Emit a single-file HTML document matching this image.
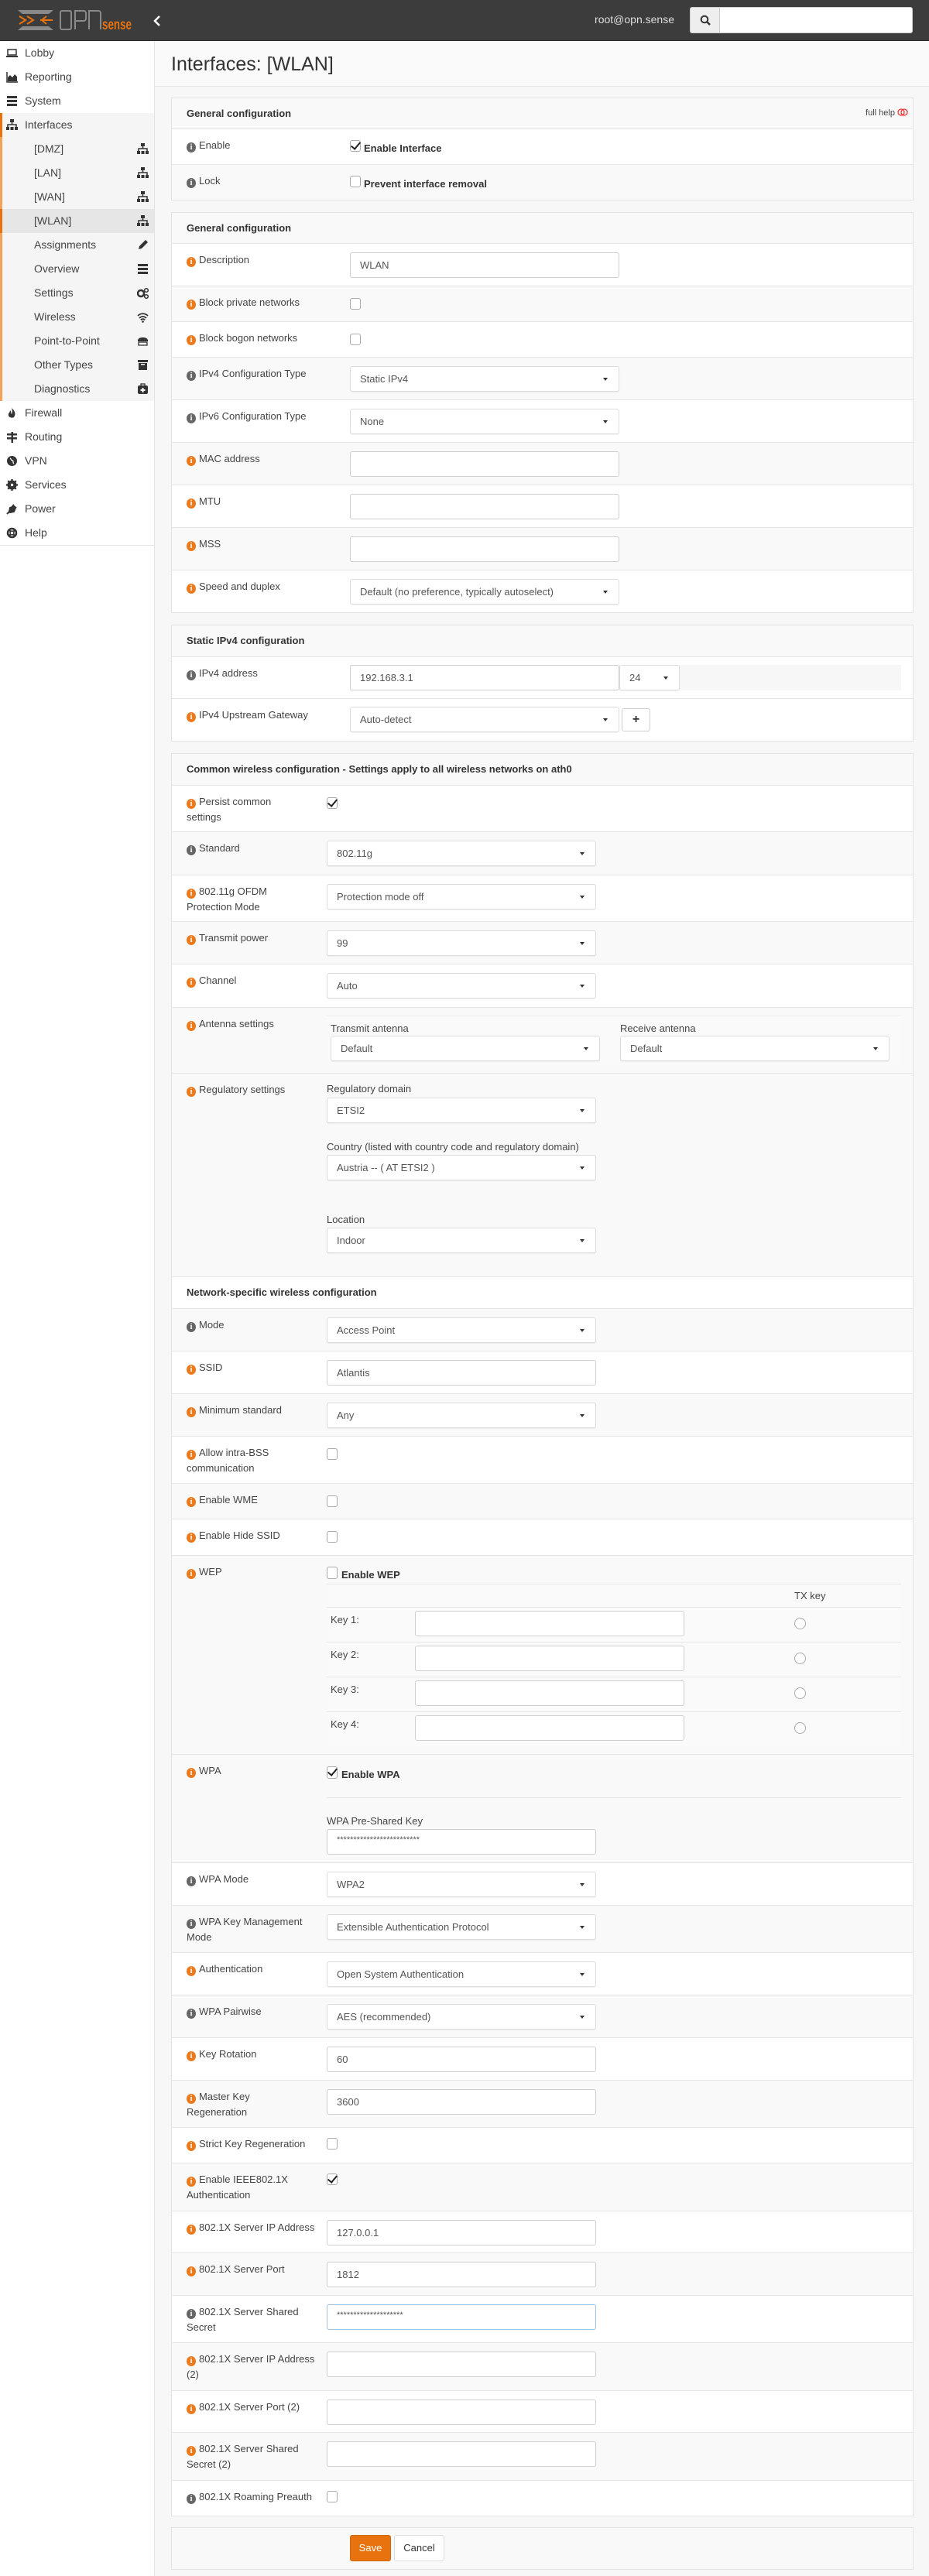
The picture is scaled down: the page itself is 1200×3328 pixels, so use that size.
<!DOCTYPE html>
<html><head><meta charset="utf-8"><style>
*{margin:0;padding:0}
body{width:1200px;height:3328px;position:relative;background:#f7f7f7;font-family:"Liberation Sans",sans-serif;color:#444;overflow:hidden}
.top{position:absolute;left:0;top:0;width:1200px;height:52px;background:#3c3c3c;border-bottom:1px solid #2a2a2a}
.side{position:absolute;left:0;top:53px;width:199px;height:3275px;background:#fff;border-right:1px solid #e3e3e3}
.it{position:absolute;left:0;width:199px;height:31px;font-size:14px;line-height:31px;color:#444}
.it .t{position:absolute;left:32px}
.it .ic{position:absolute;left:8px;top:8px;width:15px;height:15px}
.sub{background:#f5f5f5;border-left:3px solid #f4a25a;width:196px}
.sub .t{left:41px}
.sub .ic{left:174px}
.ttl{position:absolute;left:200px;top:53px;width:1000px;height:58px;background:#fafafa;border-bottom:1px solid #e5e5e5}
.ttl h1{position:absolute;left:21px;top:16px;font-size:25px;font-weight:normal;color:#333}
.box{position:absolute;left:221px;width:959px;border:1px solid #e3e3e3;box-sizing:border-box;background:#fff}
.r{position:absolute;left:222px;width:957px;box-sizing:border-box;border-top:1px solid #e6e6e6;background:#fff}
.g{background:#f9f9f9}
.lb{position:absolute;left:19px;top:11px;font-size:13px;line-height:20px;color:#444;white-space:nowrap}
.h{position:absolute;left:19px;top:12px;font-size:13px;font-weight:bold;color:#333;white-space:nowrap}
.i{display:inline-block;width:12px;height:13px;border-radius:50%;background:#666;color:#fff;font:bold 10px/13px "Liberation Serif",serif;text-align:center;margin-right:4px;vertical-align:-1px}
.o{background:#ec7a1c}
.in{position:absolute;top:11px;left:200px;width:348px;height:33px;border:1px solid #cfcfcf;border-radius:3px;background:#fff;box-sizing:border-box;font-size:13px;padding:0 12px;line-height:31px;color:#555;white-space:nowrap}
.s2 .in{left:230px}
.sel{box-shadow:0 1px 1px rgba(0,0,0,.06);border-color:#ddd}
.sel:after{content:"";position:absolute;right:14px;top:14px;border-left:3px solid transparent;border-right:3px solid transparent;border-top:4px solid #333}
.cb{position:absolute;left:200px;top:15px;width:14px;height:15px;border:1px solid #aaa;border-radius:3px;background:#fff;box-sizing:border-box}
.s2 .cb{left:230px}
.ck:after{content:"";position:absolute;left:3px;top:-1px;width:5px;height:10px;border-right:2.5px solid #222;border-bottom:2.5px solid #222;transform:rotate(40deg)}
.bl{position:absolute;font-size:13px;font-weight:bold;color:#333;white-space:nowrap}
.sm{position:absolute;font-size:13px;color:#444;white-space:nowrap}
.rad{position:absolute;width:15px;height:15px;border:1px solid #aaa;border-radius:50%;box-sizing:border-box;background:#fff}
</style></head><body>

<div class="top">
 <svg style="position:absolute;left:22px;top:11px" width="150" height="30" viewBox="0 0 150 30">
  <path d="M1 2h46l-6 5H7zM1 28h46l-6-5H7z" fill="#8a8a8a"/>
  <path d="M3 10l8 5-8 5M13 10l8 5-8 5" stroke="#e8730e" stroke-width="2" fill="none"/>
  <path d="M30 15h16M38 10l-6 5 6 5" stroke="#e8730e" stroke-width="2" fill="none"/>
  <rect x="56" y="3" width="14" height="24" rx="2" fill="none" stroke="#8a8a8a" stroke-width="2"/>
  <path d="M75 27V3h11a3 3 0 0 1 3 3v7a3 3 0 0 1-3 3H75" fill="none" stroke="#8a8a8a" stroke-width="2"/>
  <path d="M93 27V3h12a3 3 0 0 1 3 3v21" fill="none" stroke="#8a8a8a" stroke-width="2"/>
  <text x="110" y="27" font-family="Liberation Sans Narrow,Liberation Sans,sans-serif" font-weight="bold" font-size="19" fill="#e8730e" textLength="38" lengthAdjust="spacingAndGlyphs">sense</text>
 </svg>
 <svg style="position:absolute;left:198px;top:20px" width="10" height="14"><path d="M8 1L2 7l6 6" stroke="#fff" stroke-width="2.5" fill="none"/></svg>
 <div style="position:absolute;right:329px;top:17px;font-size:14px;color:#ddd">root@opn.sense</div>
 <div style="position:absolute;left:891px;top:9px;width:288px;height:34px;background:#fff;border-radius:3px;border:1px solid #ccc;box-sizing:border-box"></div>
 <div style="position:absolute;left:892px;top:10px;width:37px;height:32px;background:#eee;border-right:1px solid #ccc"><svg style="position:absolute;left:12px;top:9px" width="14" height="14"><circle cx="6" cy="6" r="4.3" stroke="#333" stroke-width="2" fill="none"/><path d="M9 9l4 4" stroke="#333" stroke-width="2.5"/></svg></div>
</div>

<div class="side">
 <div class="it" style="top:0"><svg class="ic" viewBox="0 0 15 15"><rect x="2" y="3" width="11" height="7" fill="none" stroke="#333" stroke-width="1.5"/><rect x="0" y="11" width="15" height="2" fill="#333"/></svg><span class="t">Lobby</span></div>
 <div class="it" style="top:31px"><svg class="ic" viewBox="0 0 15 15"><path d="M1 1v13h14" stroke="#333" stroke-width="1.5" fill="none"/><path d="M2 13V8l3-3 3 3 3-4 3 3v6z" fill="#333"/></svg><span class="t">Reporting</span></div>
 <div class="it" style="top:62px"><svg class="ic" viewBox="0 0 15 15"><rect x="1" y="1" width="13" height="3" fill="#333"/><rect x="1" y="6" width="13" height="3" fill="#333"/><rect x="1" y="11" width="13" height="3" fill="#333"/></svg><span class="t">System</span></div>
 <div class="it" style="top:93px;background:#f5f5f5;border-left:3px solid #e8730e;width:196px"><svg class="ic" style="left:5px" viewBox="0 0 15 15"><rect x="5" y="0" width="5" height="4" fill="#333"/><path d="M7.5 4v3M2 10V7h11v3" stroke="#333" stroke-width="1.5" fill="none"/><rect x="0" y="10" width="4" height="4" fill="#333"/><rect x="5.5" y="10" width="4" height="4" fill="#333"/><rect x="11" y="10" width="4" height="4" fill="#333"/></svg><span class="t" style="left:29px">Interfaces</span></div>
 <div class="it sub" style="top:124px"><span class="t">[DMZ]</span><svg class="ic" viewBox="0 0 15 15"><rect x="5" y="0" width="5" height="4" fill="#333"/><path d="M7.5 4v3M2 10V7h11v3" stroke="#333" stroke-width="1.5" fill="none"/><rect x="0" y="10" width="4" height="4" fill="#333"/><rect x="5.5" y="10" width="4" height="4" fill="#333"/><rect x="11" y="10" width="4" height="4" fill="#333"/></svg></div>
 <div class="it sub" style="top:155px"><span class="t">[LAN]</span><svg class="ic" viewBox="0 0 15 15"><rect x="5" y="0" width="5" height="4" fill="#333"/><path d="M7.5 4v3M2 10V7h11v3" stroke="#333" stroke-width="1.5" fill="none"/><rect x="0" y="10" width="4" height="4" fill="#333"/><rect x="5.5" y="10" width="4" height="4" fill="#333"/><rect x="11" y="10" width="4" height="4" fill="#333"/></svg></div>
 <div class="it sub" style="top:186px"><span class="t">[WAN]</span><svg class="ic" viewBox="0 0 15 15"><rect x="5" y="0" width="5" height="4" fill="#333"/><path d="M7.5 4v3M2 10V7h11v3" stroke="#333" stroke-width="1.5" fill="none"/><rect x="0" y="10" width="4" height="4" fill="#333"/><rect x="5.5" y="10" width="4" height="4" fill="#333"/><rect x="11" y="10" width="4" height="4" fill="#333"/></svg></div>
 <div class="it sub" style="top:217px;background:#e6e6e6;border-left-color:#e8730e"><span class="t">[WLAN]</span><svg class="ic" viewBox="0 0 15 15"><rect x="5" y="0" width="5" height="4" fill="#333"/><path d="M7.5 4v3M2 10V7h11v3" stroke="#333" stroke-width="1.5" fill="none"/><rect x="0" y="10" width="4" height="4" fill="#333"/><rect x="5.5" y="10" width="4" height="4" fill="#333"/><rect x="11" y="10" width="4" height="4" fill="#333"/></svg></div>
 <div class="it sub" style="top:248px"><span class="t">Assignments</span><svg class="ic" viewBox="0 0 15 15"><path d="M2 13l1-4 8-8 3 3-8 8z" fill="#333"/></svg></div>
 <div class="it sub" style="top:279px"><span class="t">Overview</span><svg class="ic" viewBox="0 0 15 15"><rect x="1" y="1" width="13" height="3" fill="#333"/><rect x="1" y="6" width="13" height="3" fill="#333"/><rect x="1" y="11" width="13" height="3" fill="#333"/></svg></div>
 <div class="it sub" style="top:310px"><span class="t">Settings</span><svg class="ic" viewBox="0 0 15 15"><circle cx="5" cy="8" r="4" fill="none" stroke="#333" stroke-width="2.5"/><circle cx="12" cy="4" r="2.3" fill="none" stroke="#333" stroke-width="1.5"/><circle cx="12" cy="12" r="2.3" fill="none" stroke="#333" stroke-width="1.5"/></svg></div>
 <div class="it sub" style="top:341px"><span class="t">Wireless</span><svg class="ic" viewBox="0 0 15 15"><path d="M1 6a9 9 0 0 1 13 0M3 9a6 6 0 0 1 9 0M5 11.5a3 3 0 0 1 5 0" stroke="#333" stroke-width="1.8" fill="none"/><circle cx="7.5" cy="13.5" r="1.3" fill="#333"/></svg></div>
 <div class="it sub" style="top:372px"><span class="t">Point-to-Point</span><svg class="ic" viewBox="0 0 15 15"><path d="M1 6a7 5 0 0 1 13 0v2H1z" fill="#333"/><rect x="2" y="9" width="11" height="4" fill="none" stroke="#333" stroke-width="1.3"/></svg></div>
 <div class="it sub" style="top:403px"><span class="t">Other Types</span><svg class="ic" viewBox="0 0 15 15"><rect x="1" y="1" width="13" height="3" fill="#333"/><rect x="2" y="5" width="11" height="9" fill="#333"/><rect x="5" y="6" width="5" height="1.5" fill="#f5f5f5"/></svg></div>
 <div class="it sub" style="top:434px"><span class="t">Diagnostics</span><svg class="ic" viewBox="0 0 15 15"><rect x="1" y="3" width="13" height="11" rx="2" fill="#333"/><rect x="5" y="1" width="5" height="3" fill="none" stroke="#333" stroke-width="1.3"/><path d="M7.5 6v6M4.5 9h6" stroke="#fff" stroke-width="2"/></svg></div>
 <div class="it" style="top:465px"><svg class="ic" viewBox="0 0 15 15"><path d="M7 1c4 4 6 7 3 12-1 1-6 1-7-2-1-3 2-4 2-7 2 2 1 4 2 5 1-2 1-5 0-8z" fill="#333"/></svg><span class="t">Firewall</span></div>
 <div class="it" style="top:496px"><svg class="ic" viewBox="0 0 15 15"><rect x="1" y="3" width="13" height="2.5" fill="#333"/><rect x="1" y="8" width="13" height="2.5" fill="#333"/><rect x="6.5" y="1" width="2.5" height="14" fill="#333"/></svg><span class="t">Routing</span></div>
 <div class="it" style="top:527px"><svg class="ic" viewBox="0 0 15 15"><circle cx="7.5" cy="7.5" r="6.5" fill="#333"/><path d="M5 4c2 1 1 3 3 3s0 3 2 4" stroke="#fff" stroke-width="1.3" fill="none"/></svg><span class="t">VPN</span></div>
 <div class="it" style="top:558px"><svg class="ic" viewBox="0 0 15 15"><circle cx="7.5" cy="7.5" r="4.5" fill="none" stroke="#333" stroke-width="3"/><path d="M7.5 0v15M0 7.5h15M2.2 2.2l10.6 10.6M12.8 2.2L2.2 12.8" stroke="#333" stroke-width="2.2"/><circle cx="7.5" cy="7.5" r="1.7" fill="#fff"/></svg><span class="t">Services</span></div>
 <div class="it" style="top:589px"><svg class="ic" viewBox="0 0 15 15"><path d="M1 14l4-4M4 11l1-5 5-2 2 2-2 5-5 1zM10 2l-2 2M13 5l-2 2" stroke="#333" stroke-width="2" fill="#333"/></svg><span class="t">Power</span></div>
 <div class="it" style="top:620px;border-bottom:1px solid #e5e5e5"><svg class="ic" viewBox="0 0 15 15"><circle cx="7.5" cy="7.5" r="5.5" fill="none" stroke="#333" stroke-width="2.5"/><circle cx="7.5" cy="7.5" r="2.5" fill="none" stroke="#333" stroke-width="1.5"/><path d="M3 3l3 3M12 3l-3 3M3 12l3-3M12 12l-3-3" stroke="#333" stroke-width="2"/></svg><span class="t">Help</span></div>
</div>

<div class="ttl"><h1>Interfaces: [WLAN]</h1></div>

<!-- Section 1 -->
<div class="box" style="top:126px;height:133px"></div>
<div class="s2">
<div class="r g" style="top:127px;height:39px;border-top:0"><div class="h">General configuration</div><div style="position:absolute;right:6px;top:13px;font-size:11px;color:#444">full help <svg width="14" height="10" style="vertical-align:-1px"><circle cx="5" cy="5" r="4" stroke="#e33" fill="none" stroke-width="1.3"/><circle cx="9" cy="5" r="4" stroke="#e33" fill="none" stroke-width="1.3"/></svg></div></div>
<div class="r" style="top:166px;height:46px"><div class="lb"><span class="i">i</span>Enable</div><div class="cb ck" style="top:14px"></div><div class="bl" style="left:248px;top:17px">Enable Interface</div></div>
<div class="r g" style="top:212px;height:46px"><div class="lb"><span class="i">i</span>Lock</div><div class="cb" style="top:14px"></div><div class="bl" style="left:248px;top:17px">Prevent interface removal</div></div>

<!-- Section 2 -->
<div class="box" style="top:274px;height:518px"></div>
<div class="r g" style="top:275px;height:39px;border-top:0"><div class="h">General configuration</div></div>
<div class="r" style="top:314px;height:55px"><div class="lb"><span class="i o">i</span>Description</div><div class="in">WLAN</div></div>
<div class="r g" style="top:369px;height:46px"><div class="lb"><span class="i o">i</span>Block private networks</div><div class="cb"></div></div>
<div class="r" style="top:415px;height:46px"><div class="lb"><span class="i o">i</span>Block bogon networks</div><div class="cb"></div></div>
<div class="r g" style="top:461px;height:55px"><div class="lb"><span class="i">i</span>IPv4 Configuration Type</div><div class="in sel">Static IPv4</div></div>
<div class="r" style="top:516px;height:55px"><div class="lb"><span class="i">i</span>IPv6 Configuration Type</div><div class="in sel">None</div></div>
<div class="r g" style="top:571px;height:55px"><div class="lb"><span class="i o">i</span>MAC address</div><div class="in"></div></div>
<div class="r" style="top:626px;height:55px"><div class="lb"><span class="i o">i</span>MTU</div><div class="in"></div></div>
<div class="r g" style="top:681px;height:55px"><div class="lb"><span class="i o">i</span>MSS</div><div class="in"></div></div>
<div class="r" style="top:736px;height:55px"><div class="lb"><span class="i o">i</span>Speed and duplex</div><div class="in sel">Default (no preference, typically autoselect)</div></div>

<!-- Section 3 -->
<div class="box" style="top:807px;height:151px"></div>
<div class="r g" style="top:808px;height:40px;border-top:0"><div class="h">Static IPv4 configuration</div></div>
<div class="r" style="top:848px;height:54px"><div class="lb"><span class="i">i</span>IPv4 address</div><div style="position:absolute;left:230px;top:10px;width:712px;height:33px;background:#f7f7f7"></div><div class="in" style="top:10px">192.168.3.1</div><div class="in sel" style="top:10px;left:578px;width:78px">24</div></div>
<div class="r" style="top:902px;height:55px"><div class="lb"><span class="i o">i</span>IPv4 Upstream Gateway</div><div class="in sel" style="top:10px">Auto-detect</div><div class="in" style="top:12px;left:581px;width:37px;height:30px;padding:0;text-align:center;font-weight:bold;font-size:16px;line-height:27px;color:#333">+</div></div>
</div>

<!-- Section 4 -->
<div class="box" style="top:973px;height:2278px"></div>
<div class="r g" style="top:974px;height:40px;border-top:0"><div class="h">Common wireless configuration - Settings apply to all wireless networks on ath0</div></div>
<div class="r" style="top:1014px;height:60px"><div class="lb"><span class="i o">i</span>Persist common<br>settings</div><div class="cb ck"></div></div>
<div class="r g" style="top:1074px;height:56px"><div class="lb"><span class="i">i</span>Standard</div><div class="in sel">802.11g</div></div>
<div class="r" style="top:1130px;height:60px"><div class="lb"><span class="i o">i</span>802.11g OFDM<br>Protection Mode</div><div class="in sel">Protection mode off</div></div>
<div class="r g" style="top:1190px;height:55px"><div class="lb"><span class="i o">i</span>Transmit power</div><div class="in sel">99</div></div>
<div class="r" style="top:1245px;height:56px"><div class="lb"><span class="i o">i</span>Channel</div><div class="in sel">Auto</div></div>
<div class="r g" style="top:1301px;height:85px"><div class="lb"><span class="i o">i</span>Antenna settings</div>
 <div style="position:absolute;left:200px;top:10px;width:742px;height:64px;background:#fafafa;border-top:1px solid #eee"></div>
 <div class="sm" style="left:205px;top:19px">Transmit antenna</div><div class="in sel" style="left:205px;top:36px">Default</div>
 <div class="sm" style="left:579px;top:19px">Receive antenna</div><div class="in sel" style="left:579px;top:36px">Default</div></div>
<div class="r g" style="top:1386px;height:263px"><div class="lb"><span class="i o">i</span>Regulatory settings</div>
 <div class="sm" style="left:200px;top:12px">Regulatory domain</div><div class="in sel" style="top:31px">ETSI2</div>
 <div class="sm" style="left:200px;top:87px">Country (listed with country code and regulatory domain)</div><div class="in sel" style="top:105px">Austria -- ( AT ETSI2 )</div>
 <div class="sm" style="left:200px;top:181px">Location</div><div class="in sel" style="top:199px">Indoor</div></div>
<div class="r" style="top:1649px;height:41px"><div class="h">Network-specific wireless configuration</div></div>
<div class="r g" style="top:1690px;height:55px"><div class="lb"><span class="i">i</span>Mode</div><div class="in sel">Access Point</div></div>
<div class="r" style="top:1745px;height:55px"><div class="lb"><span class="i o">i</span>SSID</div><div class="in">Atlantis</div></div>
<div class="r g" style="top:1800px;height:55px"><div class="lb"><span class="i o">i</span>Minimum standard</div><div class="in sel">Any</div></div>
<div class="r" style="top:1855px;height:61px"><div class="lb"><span class="i o">i</span>Allow intra-BSS<br>communication</div><div class="cb"></div></div>
<div class="r g" style="top:1916px;height:46px"><div class="lb"><span class="i o">i</span>Enable WME</div><div class="cb"></div></div>
<div class="r" style="top:1962px;height:47px"><div class="lb"><span class="i o">i</span>Enable Hide SSID</div><div class="cb"></div></div>
<div class="r g" style="top:2009px;height:257px"><div class="lb"><span class="i o">i</span>WEP</div>
 <div class="cb" style="top:14px;height:16px"></div><div class="bl" style="left:219px;top:17px">Enable WEP</div>
 <div style="position:absolute;left:200px;top:36px;width:742px;height:209px;background:#fafafa;border-top:1px solid #e6e6e6"></div>
 <div class="sm" style="left:804px;top:44px">TX key</div>
 <div style="position:absolute;left:200px;top:66px;width:742px;border-top:1px solid #e6e6e6"></div>
 <div style="position:absolute;left:200px;top:111px;width:742px;border-top:1px solid #e6e6e6"></div>
 <div style="position:absolute;left:200px;top:156px;width:742px;border-top:1px solid #e6e6e6"></div>
 <div style="position:absolute;left:200px;top:201px;width:742px;border-top:1px solid #e6e6e6"></div>
 <div class="sm" style="left:205px;top:75px">Key 1:</div><div class="in" style="left:314px;top:71px"></div><div class="rad" style="left:804px;top:80px"></div>
 <div class="sm" style="left:205px;top:120px">Key 2:</div><div class="in" style="left:314px;top:116px"></div><div class="rad" style="left:804px;top:125px"></div>
 <div class="sm" style="left:205px;top:165px">Key 3:</div><div class="in" style="left:314px;top:161px"></div><div class="rad" style="left:804px;top:170px"></div>
 <div class="sm" style="left:205px;top:210px">Key 4:</div><div class="in" style="left:314px;top:206px"></div><div class="rad" style="left:804px;top:215px"></div>
</div>
<div class="r g" style="top:2266px;height:140px"><div class="lb"><span class="i o">i</span>WPA</div>
 <div class="cb ck" style="top:15px;height:16px"></div><div class="bl" style="left:219px;top:18px">Enable WPA</div>
 <div style="position:absolute;left:200px;top:55px;width:742px;border-top:1px solid #e6e6e6"></div>
 <div class="sm" style="left:200px;top:78px">WPA Pre-Shared Key</div><div class="in" style="top:96px;line-height:26px;font-size:11px">*************************</div></div>
<div class="r" style="top:2406px;height:55px"><div class="lb"><span class="i">i</span>WPA Mode</div><div class="in sel">WPA2</div></div>
<div class="r g" style="top:2461px;height:61px"><div class="lb"><span class="i">i</span>WPA Key Management<br>Mode</div><div class="in sel">Extensible Authentication Protocol</div></div>
<div class="r" style="top:2522px;height:55px"><div class="lb"><span class="i o">i</span>Authentication</div><div class="in sel">Open System Authentication</div></div>
<div class="r g" style="top:2577px;height:55px"><div class="lb"><span class="i">i</span>WPA Pairwise</div><div class="in sel">AES (recommended)</div></div>
<div class="r" style="top:2632px;height:55px"><div class="lb"><span class="i o">i</span>Key Rotation</div><div class="in">60</div></div>
<div class="r g" style="top:2687px;height:61px"><div class="lb"><span class="i o">i</span>Master Key<br>Regeneration</div><div class="in">3600</div></div>
<div class="r" style="top:2748px;height:46px"><div class="lb"><span class="i o">i</span>Strict Key Regeneration</div><div class="cb" style="top:13px"></div></div>
<div class="r g" style="top:2794px;height:62px"><div class="lb"><span class="i o">i</span>Enable IEEE802.1X<br>Authentication</div><div class="cb ck" style="top:13px"></div></div>
<div class="r" style="top:2856px;height:54px"><div class="lb"><span class="i o">i</span>802.1X Server IP Address</div><div class="in">127.0.0.1</div></div>
<div class="r g" style="top:2910px;height:55px"><div class="lb"><span class="i o">i</span>802.1X Server Port</div><div class="in">1812</div></div>
<div class="r" style="top:2965px;height:61px"><div class="lb"><span class="i">i</span>802.1X Server Shared<br>Secret</div><div class="in" style="border-color:#9cc0e6;line-height:26px;font-size:11px">********************</div></div>
<div class="r g" style="top:3026px;height:62px"><div class="lb"><span class="i o">i</span>802.1X Server IP Address<br>(2)</div><div class="in"></div></div>
<div class="r" style="top:3088px;height:54px"><div class="lb"><span class="i o">i</span>802.1X Server Port (2)</div><div class="in"></div></div>
<div class="r g" style="top:3142px;height:62px"><div class="lb"><span class="i o">i</span>802.1X Server Shared<br>Secret (2)</div><div class="in"></div></div>
<div class="r" style="top:3204px;height:46px"><div class="lb"><span class="i">i</span>802.1X Roaming Preauth</div><div class="cb" style="top:13px"></div></div>

<!-- buttons -->
<div class="box" style="top:3265px;height:55px;background:#f9f9f9"></div>
<div style="position:absolute;left:452px;top:3275px;width:53px;height:34px;background:#e8730e;border:1px solid #d2660a;box-sizing:border-box;border-radius:3px;color:#fff;font-size:13px;line-height:32px;text-align:center">Save</div>
<div style="position:absolute;left:509px;top:3275px;width:65px;height:34px;background:#fff;border:1px solid #ddd;box-sizing:border-box;border-radius:3px;color:#333;font-size:13px;line-height:32px;text-align:center">Cancel</div>
</body></html>
